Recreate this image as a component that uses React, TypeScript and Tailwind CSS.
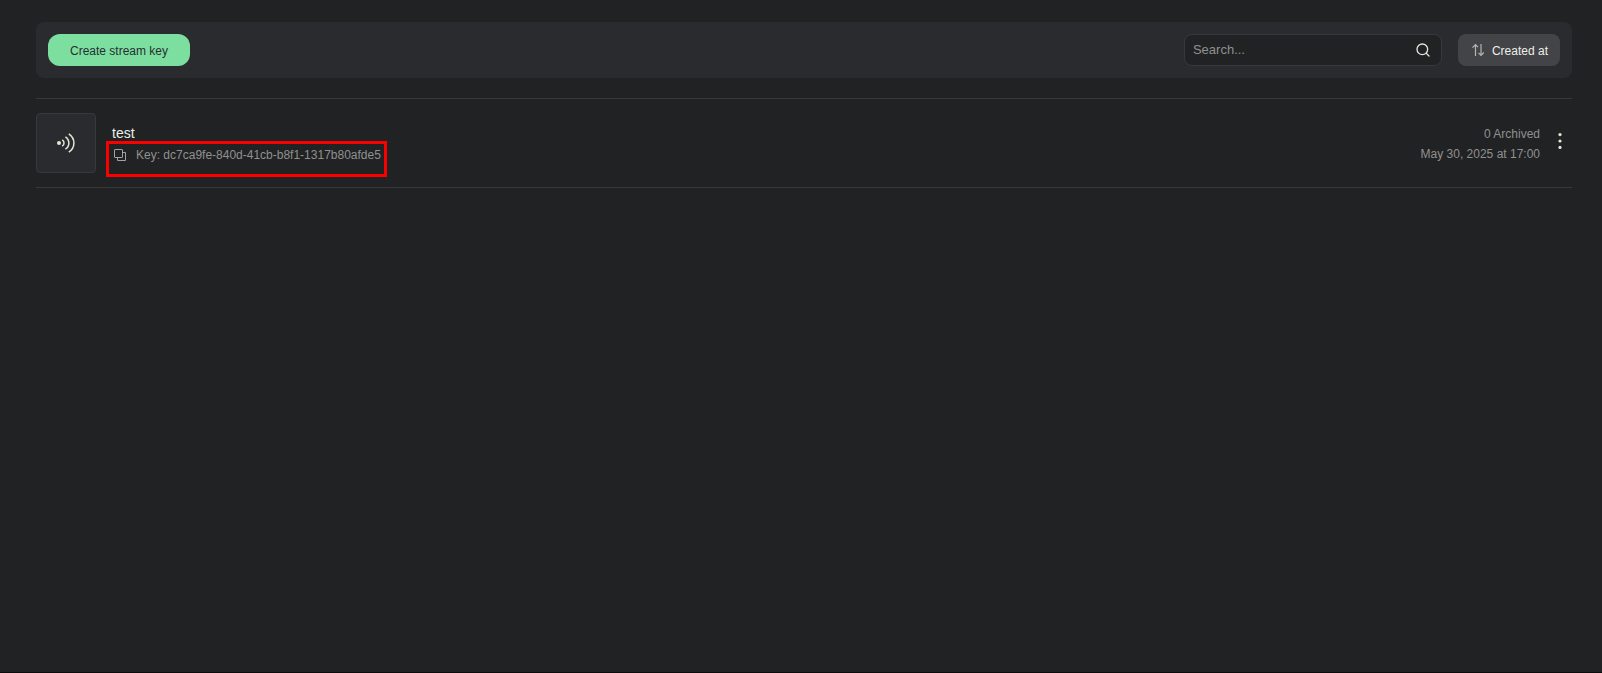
import { Search } from "lucide-react";

const streamKeys = [
  {
    name: "test",
    streamKey: "dc7ca9fe-840d-41cb-b8f1-1317b80afde5",
    archived: 0,
    createdAt: "May 30, 2025 at 17:00",
  },
];

function SortIcon() {
  return (
    <svg className="w-3 h-3" viewBox="0 0 12 12" fill="none" stroke="#b4b4b0" strokeWidth="1.2">
      <path d="M3.5 12V0.8M0.5 3.6L3.5 0.6L6 3.2" />
      <path d="M9 0V11.2M6.5 8.8L9 11.4L11.8 8.5" />
    </svg>
  );
}

function StreamIcon() {
  return (
    <svg className="w-5 h-5" viewBox="0 0 20 20" fill="none" stroke="#e4e6d8" strokeWidth="1.5">
      <circle cx="3" cy="10" r="2" fill="#e4e6d8" stroke="none" />
      <path d="M6.2 6.8C8.6 8.2 8.6 11.8 6.2 13.2" />
      <path d="M9.4 3.8C14 6.8 14 13.2 9.4 16.2" />
      <path d="M12.8 0.8C19.6 5.4 19.6 14.6 12.8 19.2" />
    </svg>
  );
}

function CopyIcon() {
  return (
    <svg className="w-3 h-3" viewBox="0 0 12 12" fill="none" stroke="#a2a29e">
      <rect x="0.5" y="0.5" width="8" height="8" rx="0.5" />
      <path d="M9 3.5H11.5V11.5H3.5V9" />
    </svg>
  );
}

function DotsIcon() {
  return (
    <svg className="w-1 h-4" viewBox="0 0 4 16" fill="#e4e6d8">
      <circle cx="2" cy="1.6" r="1.6" />
      <circle cx="2" cy="8" r="1.6" />
      <circle cx="2" cy="14.4" r="1.6" />
    </svg>
  );
}

export default function App() {
  return (
    <div className="min-h-screen bg-[#212224] border-b border-[#0c0c0d] pt-[22px] pl-9 pr-[30px] font-['Liberation_Sans',Arial,sans-serif] text-xs text-[#8f918f]">
      <header className="flex items-center justify-between bg-[#2a2b2f] rounded-lg p-3">
        <button className="h-8 px-[22px] pt-0.5 rounded-xl bg-[#7ddf9f] text-[#26302f]">
          Create stream key
        </button>
        <div className="flex items-center gap-4">
          <div className="flex items-center w-[258px] h-8 pl-2 pr-2.5 rounded-lg border border-[#37383b] bg-[#212224]">
            <input
              type="text"
              aria-label="Search"
              placeholder="Search..."
              className="flex-1 min-w-0 bg-transparent outline-none text-[13px] text-[#e6e8e2] placeholder:text-[#8f918f]"
            />
            <button aria-label="Submit search">
              <Search className="w-4 h-4 text-[#e4e6d8]" strokeWidth={2} />
            </button>
          </div>
          <button className="flex items-center gap-2 h-8 pl-3.5 pr-3 rounded-lg bg-[#434447] text-[#eceee8]">
            <SortIcon />
            <span className="pt-0.5">Created at</span>
          </button>
        </div>
      </header>

      <ul className="mt-5 border-t border-[#37383b]">
        {streamKeys.map((item) => (
          <li
            key={item.streamKey}
            className="flex items-center justify-between py-3.5 border-b border-[#37383b]"
          >
            <div className="flex items-center gap-4">
              <div className="flex items-center justify-center w-15 h-15 rounded-sm bg-[#2a2b2f] border border-[#37383b]">
                <StreamIcon />
              </div>
              <div className="flex flex-col gap-0.5 pt-0.5">
                <h3 className="text-sm leading-5 text-[#eceee8]">{item.name}</h3>
                <div className="relative flex items-center gap-2.5 h-5 px-0.5">
                  <button aria-label="Copy stream key">
                    <CopyIcon />
                  </button>
                  <span>Key: {item.streamKey}</span>
                  <span className="absolute -left-1.5 -right-1 -top-1 -bottom-3 border-3 border-[#fb0000] pointer-events-none" />
                </div>
              </div>
            </div>
            <div className="flex items-center gap-4.5 pr-2.5">
              <div className="pt-0.5 text-right leading-5">
                <p>{item.archived} Archived</p>
                <p>{item.createdAt}</p>
              </div>
              <button aria-label="More options" className="pb-1">
                <DotsIcon />
              </button>
            </div>
          </li>
        ))}
      </ul>
    </div>
  );
}
